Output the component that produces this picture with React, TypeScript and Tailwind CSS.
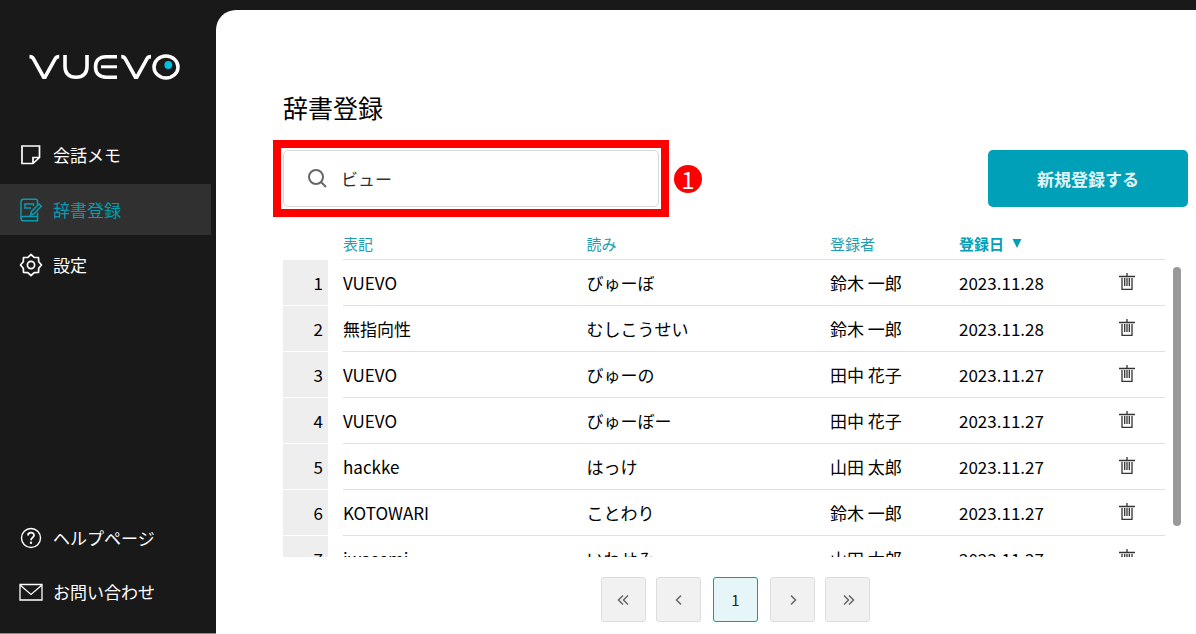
import React from 'react';

type Entry = { word: string; reading: string; author: string; date: string };

const entries: Entry[] = [
  { word: 'VUEVO', reading: 'びゅーぼ', author: '鈴木 一郎', date: '2023.11.28' },
  { word: '無指向性', reading: 'むしこうせい', author: '鈴木 一郎', date: '2023.11.28' },
  { word: 'VUEVO', reading: 'びゅーの', author: '田中 花子', date: '2023.11.27' },
  { word: 'VUEVO', reading: 'びゅーぼー', author: '田中 花子', date: '2023.11.27' },
  { word: 'hackke', reading: 'はっけ', author: '山田 太郎', date: '2023.11.27' },
  { word: 'KOTOWARI', reading: 'ことわり', author: '鈴木 一郎', date: '2023.11.27' },
  { word: 'iwasemi', reading: 'いわせみ', author: '山田 太郎', date: '2023.11.27' },
];

const iconProps = {
  width: 24,
  height: 24,
  viewBox: '0 0 24 24',
  fill: 'none',
  stroke: 'currentColor',
  'aria-hidden': true,
} as const;

const Logo = () => (
  <svg width="152" height="28" viewBox="0 0 152 28" fill="none" stroke="#fff" strokeWidth="3.6" role="img" aria-label="VUEVO">
    <path d="M0.5 3.6 C3 3.6 3.6 4.2 4.5 5.8 L14.6 24.2 H16 L26.1 5.8 C27 4.2 27.6 3.6 30.2 3.6" />
    <path d="M36 2 V13.5 C36 20.5 40 24.3 47 24.3 C54 24.3 58 20.5 58 13.5 V2" />
    <path d="M88 3.7 H77 C70 3.7 66.5 8 66.5 13.8 C66.5 20 70 24.2 77 24.2 H88" />
    <path d="M72 13.8 H88" strokeWidth="3" />
    <path d="M92.3 3.6 C94.8 3.6 95.4 4.2 96.3 5.8 L106.4 24.2 H107.8 L117.9 5.8 C118.8 4.2 119.4 3.6 122 3.6" />
    <ellipse cx="137" cy="14" rx="12" ry="11" strokeWidth="3.5" />
    <circle cx="139.3" cy="12" r="3.9" fill="#00c0dc" stroke="none" />
  </svg>
);

const MemoIcon = () => (
  <svg {...iconProps} strokeWidth="1.7">
    <path d="M3 3 H20.5 V14.5 L14 20.5 H3 Z M14 20.5 V14.5 H20.5" />
  </svg>
);

const DictionaryIcon = () => (
  <svg {...iconProps} strokeWidth="1.5">
    <path d="M18.5 6.5 V3 Q18.5 1.2 16.7 1.2 H4.5 Q2 1.2 2 3.8 V20.2 Q2 22.8 4.5 22.8 H18.5 V14.5" />
    <path d="M18.5 18.5 H4.5 Q2 18.5 2 20.6 M12 10 H6 V6 H14.5 V8" />
    <path d="M11.5 17 L12.5 13.5 L20 6 L22.3 8.3 L15 15.8 Z" />
  </svg>
);

const GearIcon = () => (
  <svg {...iconProps} strokeWidth="1.7" strokeLinejoin="round">
    <circle cx="12" cy="12" r="3.6" />
    <path d="M12 1.5 L15.2 4.3 L19.5 4.5 L19.7 8.8 L22.5 12 L19.7 15.2 L19.5 19.5 L15.2 19.7 L12 22.5 L8.8 19.7 L4.5 19.5 L4.3 15.2 L1.5 12 L4.3 8.8 L4.5 4.5 L8.8 4.3 Z" />
  </svg>
);

const HelpIcon = () => (
  <svg {...iconProps} strokeWidth="1.4">
    <circle cx="12" cy="12" r="9.5" />
    <path d="M9 9.5 C9 5.8 15 5.8 15 9.3 C15 11.6 12 11.7 12 14.2" strokeWidth="1.8" />
    <circle cx="12" cy="16.8" r="1.2" fill="currentColor" stroke="none" />
  </svg>
);

const MailIcon = () => (
  <svg {...iconProps} strokeWidth="1.3">
    <path d="M1 4.5 H23 V20 H1 Z M1 5 L12 14.5 L23 5" />
  </svg>
);

const TrashIcon = () => (
  <svg width="16" height="18" viewBox="0 0 16 18" fill="none" stroke="currentColor" strokeWidth="1.3" aria-hidden="true">
    <path d="M0 3.5 H16 M8 0 V3.5 M3 5 V16.3 H13 V5 M5.7 5 V13 M8 5 V13 M10.3 5 V13" />
  </svg>
);

const NavItem = ({ icon, label, active }: { icon: React.ReactNode; label: string; active?: boolean }) => (
  <a
    href="#"
    className={`mr-[5px] flex h-[51px] items-center gap-[10px] pl-[19px] ${
      active ? 'bg-[#303030] text-[#0a9bb0]' : 'text-white'
    }`}
  >
    {icon}
    <span>{label}</span>
  </a>
);

const PageButton = ({ label, d }: { label: string; d: string }) => (
  <button
    type="button"
    aria-label={label}
    className="flex size-[45px] items-center justify-center rounded-[3px] border border-[#dcdcdc] bg-[#f1f1f1] text-[#666]"
  >
    <svg width="16" height="16" viewBox="0 0 16 16" fill="none" stroke="currentColor" strokeWidth="1.5" aria-hidden="true">
      <path d={d} />
    </svg>
  </button>
);

const Sidebar = () => (
  <aside className="flex w-[216px] shrink-0 flex-col border-b border-[#8a8a8a] pb-4">
    <div className="mt-[53px] mb-12 pl-[29px]">
      <Logo />
    </div>
    <nav className="flex flex-col gap-1">
      <NavItem icon={<MemoIcon />} label="会話メモ" />
      <NavItem icon={<DictionaryIcon />} label="辞書登録" active />
      <NavItem icon={<GearIcon />} label="設定" />
    </nav>
    <nav className="mt-auto flex flex-col gap-[3px]">
      <NavItem icon={<HelpIcon />} label="ヘルプページ" />
      <NavItem icon={<MailIcon />} label="お問い合わせ" />
    </nav>
  </aside>
);

const EntryTable = () => (
  <table className="w-full table-fixed border-separate border-spacing-0 text-left">
    <colgroup>
      <col className="w-[60px]" />
      <col />
      <col />
      <col className="w-[129px]" />
      <col className="w-[130px]" />
      <col className="w-[76px]" />
    </colgroup>
    <thead>
      <tr className="h-[30px] text-[15px] leading-6 text-[#1a9fb5] *:px-0 *:pt-0 *:pb-[2px] *:font-normal">
        <th aria-label="番号" />
        <th className="border-b border-[#e0e0e0]">表記</th>
        <th className="border-b border-[#e0e0e0]">読み</th>
        <th className="border-b border-[#e0e0e0]">登録者</th>
        <th className="border-b border-[#e0e0e0]" aria-sort="descending">
          <button type="button" className="flex items-center gap-2 font-bold text-[#00a0b8]">
            登録日
            <svg width="10" height="10" viewBox="0 0 10 10" fill="currentColor" aria-hidden="true">
              <path d="M0.5 0 H9.5 L5 9 Z" />
            </svg>
          </button>
        </th>
        <th className="border-b border-[#e0e0e0]" aria-label="削除" />
      </tr>
    </thead>
    <tbody>
      {entries.map((entry, i) => (
        <tr key={i} className="h-[46px] *:p-0">
          <td className="border-b border-white">
            <div className="flex h-[45px] w-[45px] items-center justify-end bg-[#eee] pr-[5px]">{i + 1}</div>
          </td>
          <td className="border-b border-[#e0e0e0]">{entry.word}</td>
          <td className="border-b border-[#e0e0e0]">{entry.reading}</td>
          <td className="border-b border-[#e0e0e0]">{entry.author}</td>
          <td className="border-b border-[#e0e0e0]">{entry.date}</td>
          <td className="border-b border-[#e0e0e0]">
            <button type="button" aria-label="削除" className="mx-auto block pb-[2px] text-[#333]">
              <TrashIcon />
            </button>
          </td>
        </tr>
      ))}
    </tbody>
  </table>
);

const App: React.FC = () => {
  return (
    <div className="flex h-screen bg-[#191919] font-['Noto_Sans_CJK_JP',sans-serif] text-[17px] leading-6">
      <Sidebar />

      <main className="mt-[10px] flex min-w-0 flex-1 flex-col rounded-tl-[20px] bg-white pt-[79px] pr-2 pb-3 pl-[67px] text-black">
        <h1 className="text-[25px] leading-9">辞書登録</h1>

        <div className="mt-[25px] flex items-center justify-between">
          <div className="flex items-center gap-[15px]">
            <div className="relative">
              <label className="flex h-[57px] w-[376px] items-center gap-[14px] rounded-[5px] border border-[#d8d8d8] pl-6">
                <svg width="19" height="19" viewBox="0 0 19 19" fill="none" stroke="#666" strokeWidth="2" aria-hidden="true">
                  <circle cx="8" cy="8" r="7" />
                  <path d="M13 13 L18 18" />
                </svg>
                <input
                  type="text"
                  aria-label="検索"
                  defaultValue="ビュー"
                  className="min-w-0 flex-1 bg-transparent text-[#333] outline-none"
                />
              </label>
              <div className="pointer-events-none absolute -inset-[10px] border-8 border-[#ff0000]" />
            </div>
            <span className="flex size-7 items-center justify-center rounded-full bg-[#ff0000] text-[24px] text-white">
              1
            </span>
          </div>
          <button type="button" className="h-[57px] w-[200px] rounded-[5px] bg-[#00a0b8] font-bold text-[#e0f4f7]">
            新規登録する
          </button>
        </div>

        <div className="mt-[23px] flex min-h-0 flex-1 gap-2 pr-[7px]">
          <div className="min-w-0 flex-1 overflow-hidden">
            <EntryTable />
          </div>
          <div className="w-2 pt-[37px] pb-[31px]">
            <div className="h-full rounded-full bg-[#99999b]" />
          </div>
        </div>

        <nav className="mt-5 flex justify-center gap-[10px]" aria-label="ページ">
          <PageButton label="最初" d="M7 3.5 L2.5 8 L7 12.5 M12 3.5 L7.5 8 L12 12.5" />
          <PageButton label="前へ" d="M10 3.5 L5.5 8 L10 12.5" />
          <button
            type="button"
            aria-current="page"
            className="mx-[2px] size-[45px] rounded-[3px] border border-[#00a0b8] bg-[#e6f5f8] text-[15px] text-[#222]"
          >
            1
          </button>
          <PageButton label="次へ" d="M6 3.5 L10.5 8 L6 12.5" />
          <PageButton label="最後" d="M4 3.5 L8.5 8 L4 12.5 M9 3.5 L13.5 8 L9 12.5" />
        </nav>
      </main>
    </div>
  );
};

export default App;
